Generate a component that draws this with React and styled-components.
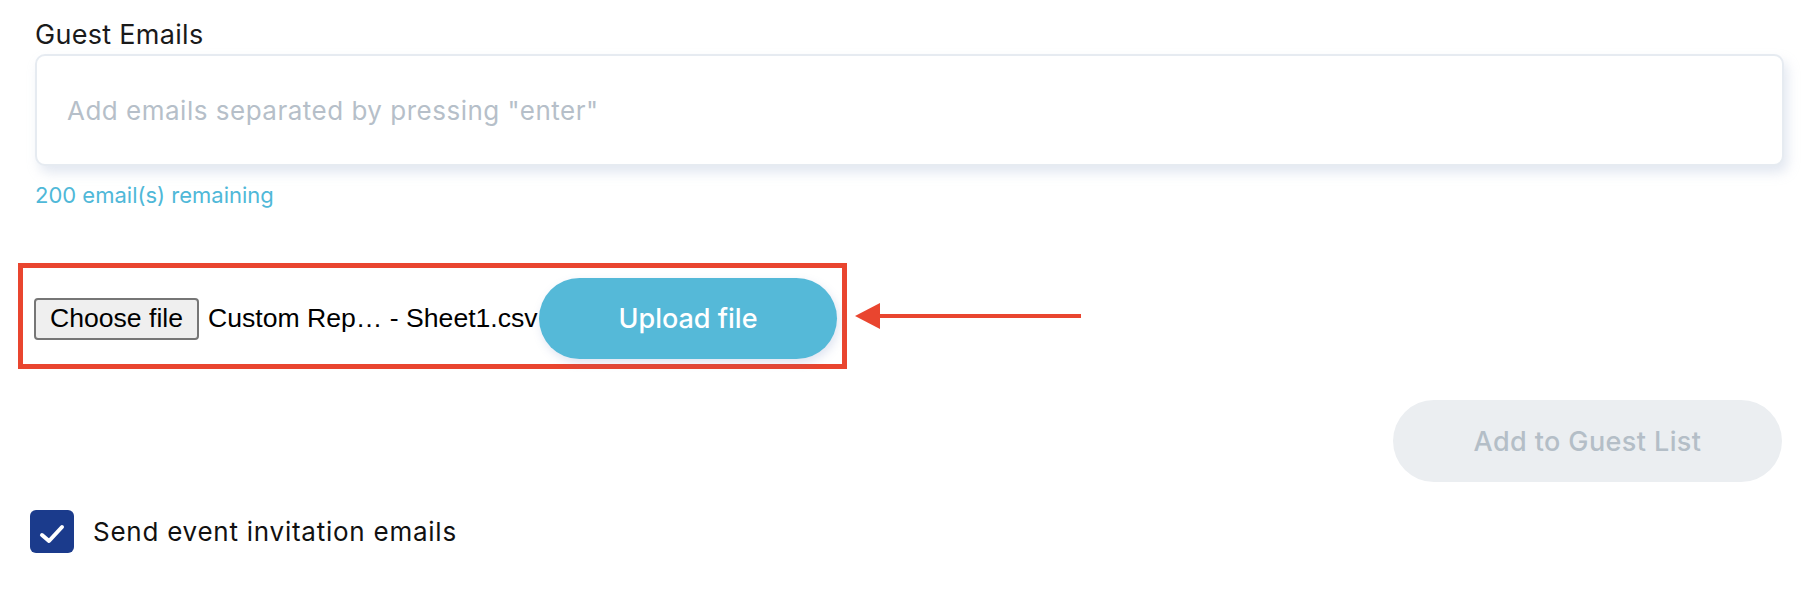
import React from "react";
import styled, { createGlobalStyle } from "styled-components";

const GlobalStyle = createGlobalStyle`
  html, body {
    margin: 0;
    padding: 0;
    background: #ffffff;
  }
  body {
    font-family: Inter, "DejaVu Sans", sans-serif;
  }
`;

export default function App() {
  return (
    <>
      <GlobalStyle />
      <Page>
        <FieldLabel>Guest Emails</FieldLabel>
        <EmailBox>
          <EmailInput placeholder='Add emails separated by pressing "enter"' />
        </EmailBox>
        <Remaining>200 email(s) remaining</Remaining>

        <AnnotatedRow>
          <Highlight>
            <FakeFileButton type="button">Choose file</FakeFileButton>
            <FileName>Custom Rep… - Sheet1.csv</FileName>
            <UploadButton type="button">Upload file</UploadButton>
          </Highlight>
          <Arrow width="228" height="28" viewBox="0 0 228 28">
            <polygon points="0,14 25,1 25,27" fill="#e9452f" />
            <rect x="22" y="12" width="204" height="4" fill="#e9452f" />
          </Arrow>
        </AnnotatedRow>

        <ActionRow>
          <AddButton type="button" disabled>
            Add to Guest List
          </AddButton>
        </ActionRow>

        <CheckRow>
          <CheckBox>
            <svg width="44" height="43" viewBox="0 0 44 43">
              <polyline
                points="12,25 19,31 32,17"
                fill="none"
                stroke="#ffffff"
                strokeWidth="4"
                strokeLinecap="round"
                strokeLinejoin="round"
              />
            </svg>
          </CheckBox>
          <CheckLabel>Send event invitation emails</CheckLabel>
        </CheckRow>
      </Page>
    </>
  );
}

const Page = styled.div`
  padding: 18px 36px 0 35px;
  display: flex;
  flex-direction: column;
`;

const FieldLabel = styled.div`
  font-size: 27px;
  letter-spacing: 0.3px;
  line-height: 34px;
  color: #1a1a1a;
  margin-bottom: 2px;
`;

const EmailBox = styled.div`
  height: 112px;
  box-sizing: border-box;
  border: 2px solid #e6ebf1;
  border-radius: 10px;
  background: #fff;
  box-shadow: 4px 7px 12px rgba(176, 190, 216, 0.35);
  display: flex;
  align-items: center;
`;

const EmailInput = styled.input`
  flex: 1;
  border: none;
  outline: none;
  background: transparent;
  padding: 0 30px;
  font-family: Inter, sans-serif;
  font-size: 26px;
  letter-spacing: 0.5px;
  color: #333;

  &::placeholder {
    color: #b6bfc9;
  }
`;

const Remaining = styled.div`
  margin-top: 14px;
  font-size: 22px;
  line-height: 30px;
  color: #4fb8d8;
`;

const AnnotatedRow = styled.div`
  margin-top: 53px;
  margin-left: -17px;
  display: flex;
  align-items: center;
  gap: 8px;
`;

const Highlight = styled.div`
  width: 829px;
  height: 106px;
  box-sizing: border-box;
  border: 5px solid #e9452f;
  padding: 10px 5px 5px 11px;
  display: flex;
  align-items: center;
`;

const FakeFileButton = styled.button`
  height: 42px;
  box-sizing: border-box;
  padding: 0 14px;
  border: 2px solid #767676;
  border-radius: 4px;
  background: #efefef;
  font-family: "Liberation Sans", Arial, sans-serif;
  font-size: 26.6px;
  color: #000;
`;

const FileName = styled.span`
  margin-left: 9px;
  font-family: "Liberation Sans", Arial, sans-serif;
  font-size: 26.6px;
  color: #000;
  white-space: nowrap;
`;

const UploadButton = styled.button`
  margin-left: auto;
  width: 298px;
  height: 81px;
  border: none;
  border-radius: 41px;
  background: #55b9d8;
  color: #fff;
  font-family: Inter, sans-serif;
  font-size: 27px;
  font-weight: 500;
  box-shadow: 2px 4px 10px rgba(110, 130, 190, 0.22);
`;

const Arrow = styled.svg`
  display: block;
`;

const ActionRow = styled.div`
  margin-top: 31px;
  display: flex;
  justify-content: flex-end;
  padding-right: 2px;
`;

const AddButton = styled.button`
  width: 389px;
  height: 82px;
  border: none;
  border-radius: 41px;
  background: #ebeef1;
  color: #b4bec7;
  font-family: Inter, sans-serif;
  font-size: 27px;
  font-weight: 500;
  letter-spacing: 0.4px;
`;

const CheckRow = styled.div`
  margin-top: 28px;
  margin-left: -5px;
  display: flex;
  align-items: center;
  gap: 19px;
`;

const CheckBox = styled.div`
  width: 44px;
  height: 43px;
  border-radius: 6px;
  background: #1b3b8c;
  display: flex;
  align-items: center;
  justify-content: center;
`;

const CheckLabel = styled.span`
  font-size: 26px;
  letter-spacing: 0.75px;
  color: #111;
`;
